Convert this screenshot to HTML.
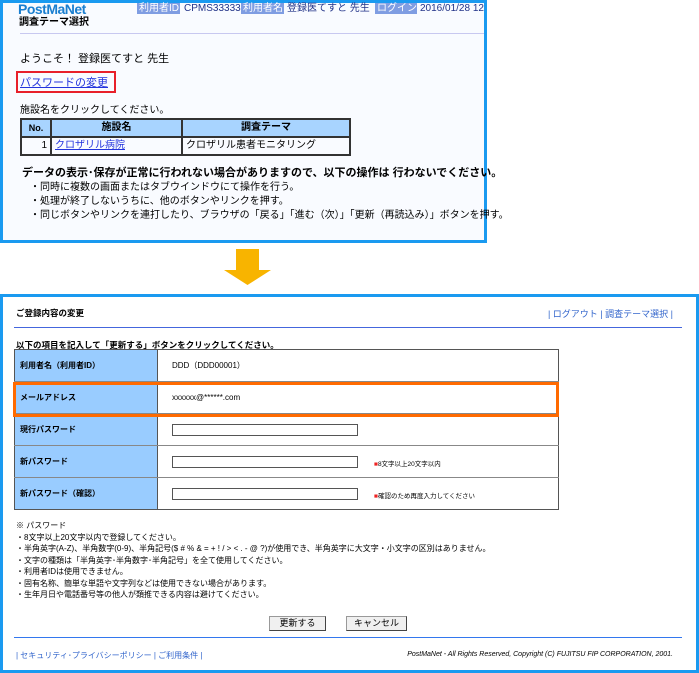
<!DOCTYPE html>
<html><head><meta charset="utf-8"><style>
*{margin:0;padding:0;box-sizing:border-box}
body{width:699px;height:673px;background:#fff;position:relative;overflow:hidden;font-family:"Liberation Sans","Noto Sans CJK JP",sans-serif;color:#000}
.a{position:absolute;white-space:nowrap}
.p1{position:absolute;left:0;top:0;width:487px;height:243px;border:3px solid #1a9af0;background:#f9fbff}
.p2{position:absolute;left:0;top:294px;width:699px;height:379px;border:3px solid #1a9af0;background:#fff}
.lab{background:#7f9de2;color:#fff;font-size:10px;padding:0 2px;line-height:11px}
.val{color:#223388;font-size:10px;line-height:11px}
table{border-collapse:collapse}
.t1 td{border:2px solid #333;font-size:10px;height:18px;padding:0 3px;line-height:14px}
.t2 td{border-bottom:1px solid #888;font-size:8px;height:32px}
.inp{position:absolute;left:172px;width:186px;height:12px;border:1px solid #555;background:#fff}
.btn{position:absolute;top:616px;height:15px;background:#f0f0f0;border:1px solid #999;border-right-color:#444;border-bottom-color:#444;font-size:9px;text-align:center;line-height:13px}
</style></head><body>
<div class="p1"></div>
<div class="a" style="left:18px;top:2px;font-size:14px;font-weight:bold;color:#1a7fd0;letter-spacing:-0.5px;line-height:14px">PostMaNet</div>
<div class="a lab" style="left:137px;top:3px;width:43px">利用者ID</div>
<div class="a val" style="left:184px;top:3px">CPMS33333D</div>
<div class="a lab" style="left:241px;top:3px;width:43px">利用者名</div>
<div class="a val" style="left:287px;top:3px">登録医てすと 先生</div>
<div class="a lab" style="left:375px;top:3px;width:42px">ログイン</div>
<div class="a val" style="left:420px;top:3px">2016/01/28 12</div>
<div class="a" style="left:19px;top:17px;font-size:10px;font-weight:bold;line-height:12px">調査テーマ選択</div>
<div class="a" style="left:20px;top:33px;width:464px;height:1px;background:#c8c8f0"></div>
<div class="a" style="left:20px;top:50px;font-size:11px">ようこそ！ 登録医てすと 先生</div>
<div class="a" style="left:16px;top:71px;width:100px;height:22px;border:2px solid #e8202a"></div>
<div class="a" style="left:20px;top:74px;font-size:11px;color:#2233dd;text-decoration:underline">パスワードの変更</div>
<div class="a" style="left:20px;top:104px;font-size:10px;line-height:13px">施設名をクリックしてください。</div>
<table class="t1 a" style="left:20px;top:118px;width:331px">
<tr style="background:#a8d4ff;font-weight:bold;text-align:center"><td style="width:30px;font-size:9px">No.</td><td style="width:131px">施設名</td><td>調査テーマ</td></tr>
<tr><td style="text-align:right">1</td><td style="color:#2233dd;text-decoration:underline">クロザリル病院</td><td>クロザリル患者モニタリング</td></tr>
</table>
<div class="a" style="left:22px;top:166px;font-size:11px;font-weight:bold;line-height:14px">データの表示･保存が正常に行われない場合がありますので、以下の操作は 行わないでください。</div>
<div class="a" style="left:30px;top:181px;font-size:10px;line-height:14px">・同時に複数の画面またはタブウインドウにて操作を行う。<br>・処理が終了しないうちに、他のボタンやリンクを押す。<br>・同じボタンやリンクを連打したり、ブラウザの「戻る」「進む（次）」「更新（再読込み）」ボタンを押す。</div>

<svg class="a" style="left:224px;top:249px" width="48" height="37"><path d="M12 0H35V21H47L23.5 36L0 21H12Z" fill="#f8b400"/></svg>

<div class="p2"></div>
<div class="a" style="left:16px;top:307px;font-size:8.5px;font-weight:bold">ご登録内容の変更</div>
<div class="a" style="right:26px;top:307px;font-size:9px;color:#3366cc">| ログアウト | 調査テーマ選択 |</div>
<div class="a" style="left:14px;top:327px;width:668px;height:1px;background:#4466dd"></div>
<div class="a" style="left:16px;top:339px;font-size:8.5px;font-weight:bold">以下の項目を記入して「更新する」ボタンをクリックしてください。</div>
<table class="t2 a" style="left:14px;top:349px;width:545px;border:1px solid #555">
<tr><td style="width:143px;background:#99ccff;border-right:1px solid #555;font-weight:bold;padding-left:5px">利用者名（利用者ID）</td><td style="padding-left:14px">DDD（DDD00001）</td></tr>
<tr><td style="background:#99ccff;border-right:1px solid #555;font-weight:bold;padding-left:5px">メールアドレス</td><td style="padding-left:14px">xxxxxx@******.com</td></tr>
<tr><td style="background:#99ccff;border-right:1px solid #555;font-weight:bold;padding-left:5px">現行パスワード</td><td></td></tr>
<tr><td style="background:#99ccff;border-right:1px solid #555;font-weight:bold;padding-left:5px">新パスワード</td><td></td></tr>
<tr><td style="background:#99ccff;border-right:1px solid #555;font-weight:bold;padding-left:5px;border-bottom:none">新パスワード（確認）</td><td style="border-bottom:none"></td></tr>
</table>
<div class="a" style="left:13px;top:382px;width:546px;height:35px;border:3px solid #ff6a00"></div>
<div class="inp" style="top:424px"></div>
<div class="inp" style="top:456px"></div>
<div class="inp" style="top:488px"></div>
<div class="a" style="left:374px;top:458px;font-size:6.5px"><span style="color:#e22">■</span>8文字以上20文字以内</div>
<div class="a" style="left:374px;top:490px;font-size:6.5px"><span style="color:#e22">■</span>確認のため再度入力してください</div>
<div class="a" style="left:16px;top:520px;font-size:8px;line-height:11.5px">※ パスワード<br>・8文字以上20文字以内で登録してください。<br>・半角英字(A-Z)、半角数字(0-9)、半角記号($ # % &amp; = + ! / &gt; &lt; . - @ ?)が使用でき、半角英字に大文字・小文字の区別はありません。<br>・文字の種類は「半角英字･半角数字･半角記号」を全て使用してください。<br>・利用者IDは使用できません。<br>・固有名称、簡単な単語や文字列などは使用できない場合があります。<br>・生年月日や電話番号等の他人が類推できる内容は避けてください。</div>
<div class="btn" style="left:269px;width:57px">更新する</div>
<div class="btn" style="left:346px;width:61px">キャンセル</div>
<div class="a" style="left:14px;top:637px;width:668px;height:1px;background:#3377ee"></div>
<div class="a" style="left:16px;top:650px;font-size:8px;color:#3366cc">| セキュリティ･プライバシーポリシー | ご利用条件 |</div>
<div class="a" style="right:26px;top:651px;font-size:7px;font-style:italic">PostMaNet - All Rights Reserved, Copyright (C) FUJITSU FIP CORPORATION, 2001.</div>
</body></html>
